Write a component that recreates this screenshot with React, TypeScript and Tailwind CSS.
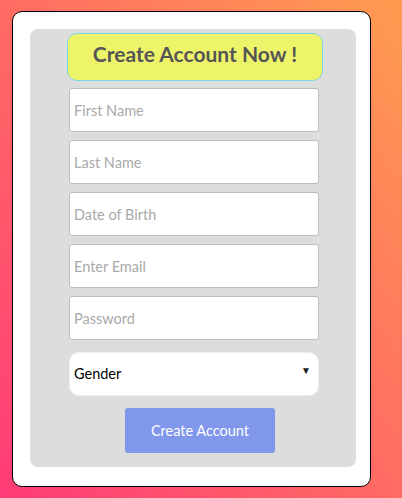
import React from "react";

const font = { fontFamily: "Lato, 'Noto Sans', sans-serif" };

function Field({ placeholder, type = "text" }: { placeholder: string; type?: string }) {
  return (
    <input
      type={type}
      placeholder={placeholder}
      className="ml-[39px] block h-[44px] w-[250px] rounded-[3px] border border-[#bdbdbd] bg-white pl-[4px] text-[14.5px] text-[#333] outline-none placeholder:text-[#a9a9a9]"
      style={font}
    />
  );
}

export default function App() {
  return (
    <div
      className="min-h-[498px] w-full bg-[linear-gradient(to_top_right,#ff3b77,#ff9c50)] pl-[12px] pt-[11px]"
      style={font}
    >
      <div className="h-[476px] w-[359px] rounded-[10px] border border-black bg-white pl-[17px] pt-[17px]">
        <div className="flex h-[438px] w-[326px] flex-col items-start rounded-[8px] bg-[#dddddd] pt-[4px]">
          <div className="ml-[37px] flex h-[48px] w-[256px] items-center justify-center rounded-[10px] border border-[#7ad8e6] bg-[#eef46a] pb-[7px]">
            <h1 className="text-[21px] font-bold leading-none text-[#555555]">Create Account Now !</h1>
          </div>
          <div className="mt-[7px] flex flex-col gap-[8px]">
            <Field placeholder="First Name" />
            <Field placeholder="Last Name" />
            <Field placeholder="Date of Birth" />
            <Field placeholder="Enter Email" type="email" />
            <Field placeholder="Password" type="password" />
          </div>
          <div className="relative ml-[39px] mt-[12px] h-[44px] w-[250px]">
            <select
              className="h-full w-full appearance-none rounded-[10px] border border-[#eeeeee] bg-white pl-[4px] text-[14.5px] text-black outline-none"
              style={font}
              defaultValue="Gender"
            >
              <option>Gender</option>
              <option>Male</option>
              <option>Female</option>
            </select>
            <span className="pointer-events-none absolute right-[8px] top-[13px] text-[10px] leading-none text-[#222]">▼</span>
          </div>
          <button
            className="ml-[95px] mt-[12px] h-[45px] w-[150px] rounded-[3px] bg-[#8097eb] text-[14.5px] text-white"
            style={font}
          >
            Create Account
          </button>
        </div>
      </div>
    </div>
  );
}
